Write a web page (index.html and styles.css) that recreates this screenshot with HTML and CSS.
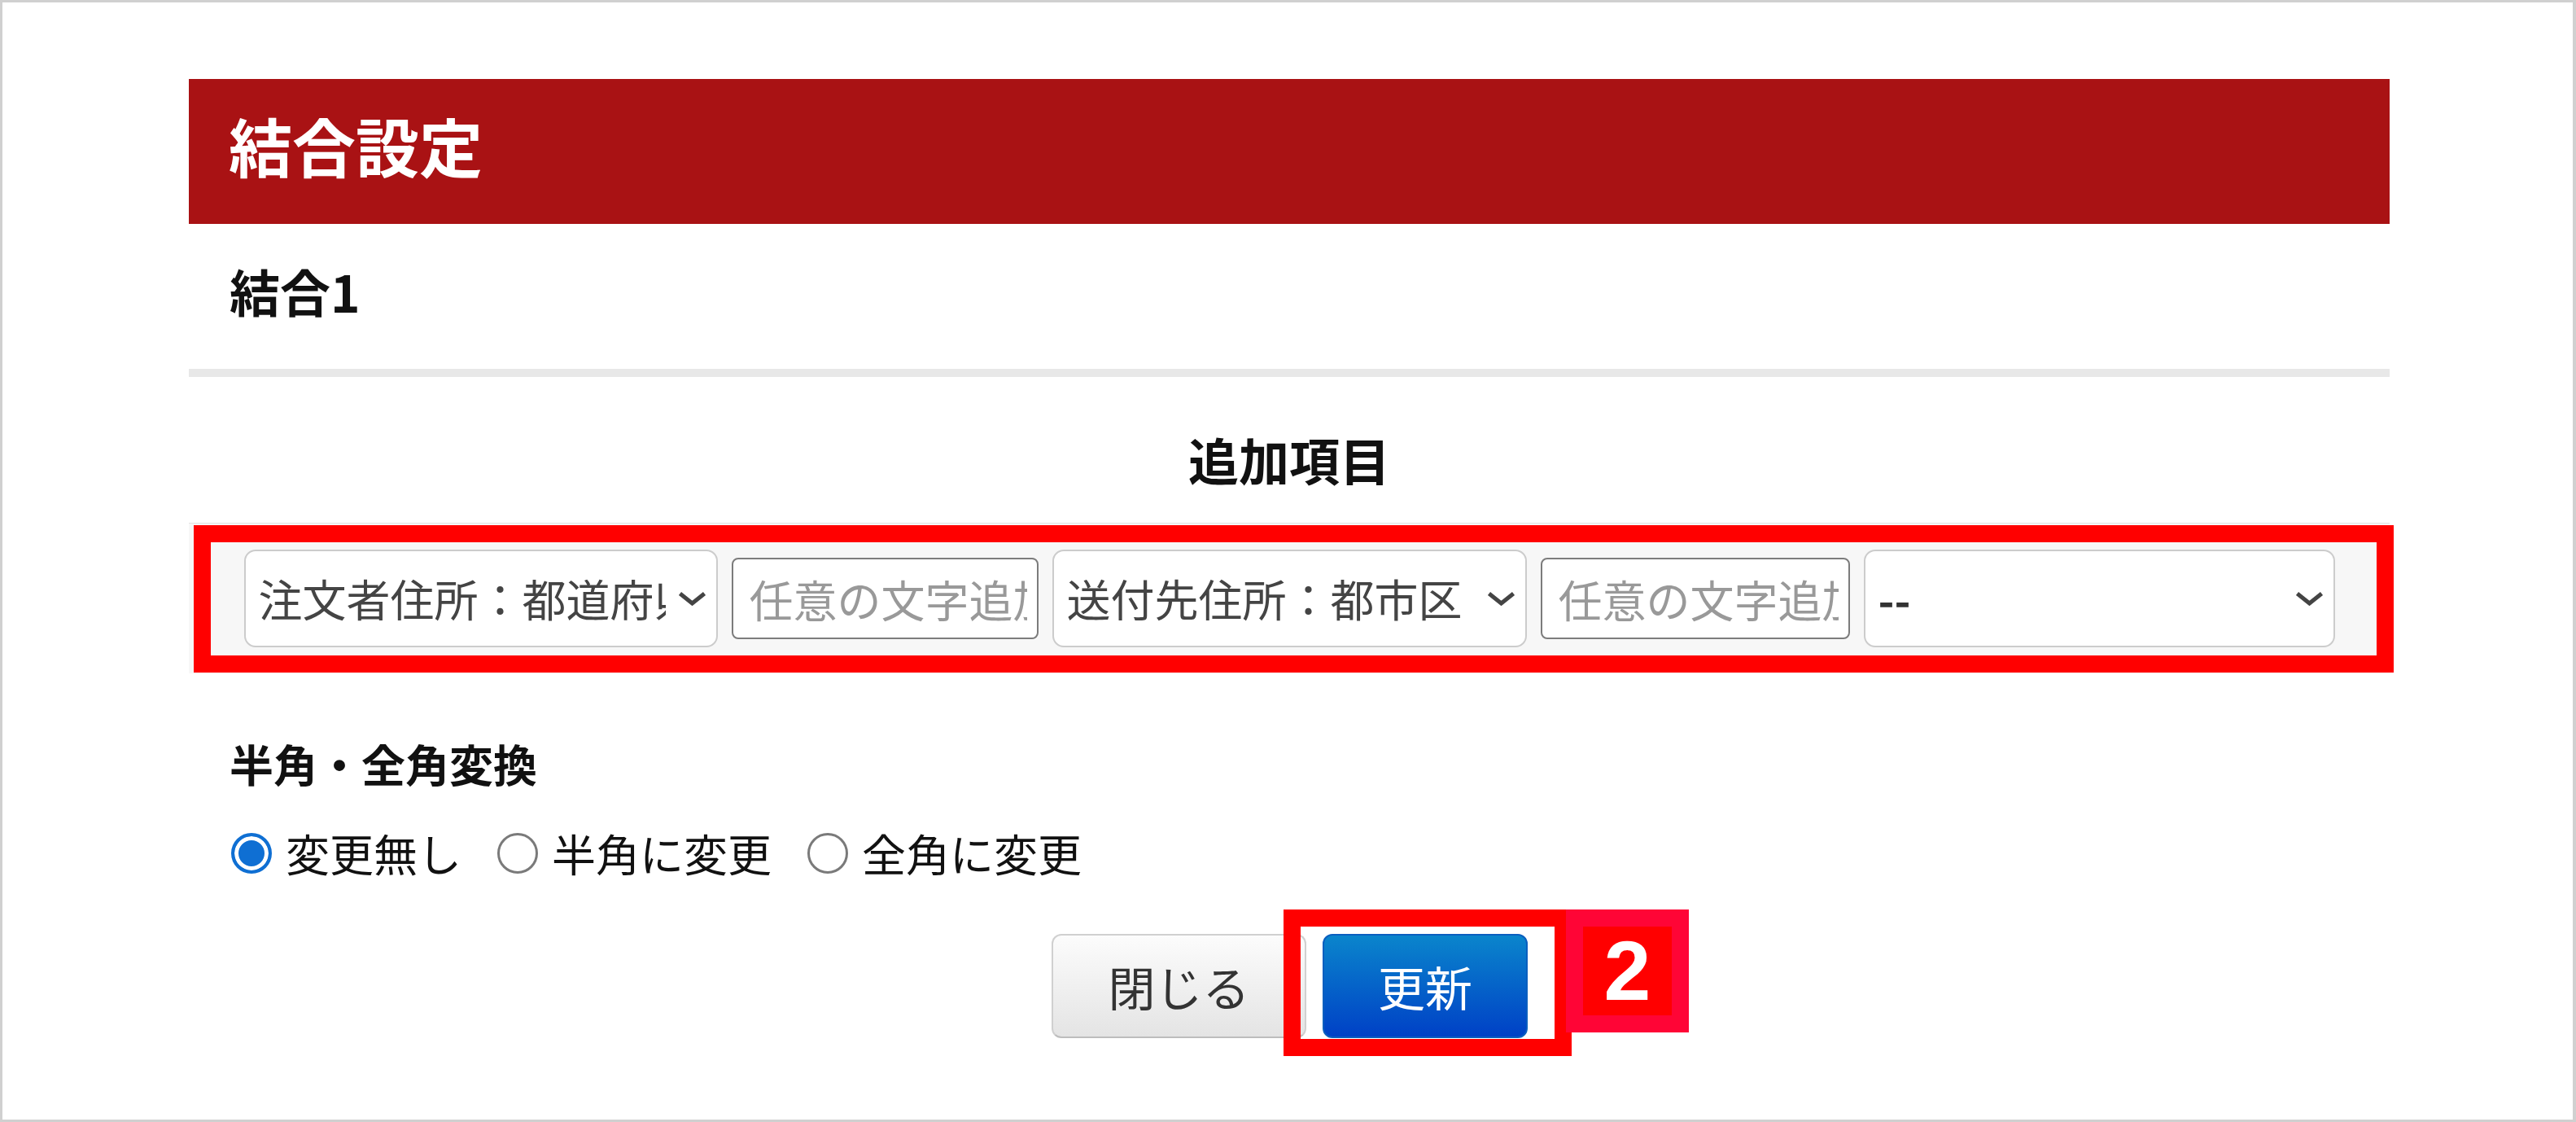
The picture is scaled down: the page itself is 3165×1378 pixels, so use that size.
FILE: index.html
```html
<!DOCTYPE html>
<html lang="ja">
<head>
    <meta charset="UTF-8">
    <meta name="viewport" content="width=device-width, initial-scale=1.0">
    <title>結合設定</title>
    <link rel="stylesheet" href="styles.css">
</head>
<body>
    <div class="frame">
        <div class="panel">
            <h1 class="panel-title">結合設定</h1>
            <div class="section-head">結合1</div>

            <h3 class="field-title">追加項目</h3>
            <div class="field-row">
                <div class="select select-a">
                    <span class="select-value">注文者住所：都道府県</span>
                    <svg class="chevron" viewBox="0 0 35 18"><path d="M2.5 3 L17.5 15 L32.5 3"/></svg>
                </div>
                <input type="text" class="text-input input-a" placeholder="任意の文字追加">
                <div class="select select-b">
                    <span class="select-value">送付先住所：都市区</span>
                    <svg class="chevron" viewBox="0 0 35 18"><path d="M2.5 3 L17.5 15 L32.5 3"/></svg>
                </div>
                <input type="text" class="text-input input-b" placeholder="任意の文字追加">
                <div class="select select-c">
                    <span class="select-value">--</span>
                    <svg class="chevron" viewBox="0 0 35 18"><path d="M2.5 3 L17.5 15 L32.5 3"/></svg>
                </div>
                <span class="mark mark-row"></span>
            </div>

            <div class="convert">
                <h4 class="convert-title">半角・全角変換</h4>
                <div class="radios">
                    <label class="radio"><input type="radio" name="conv" checked><span>変更無し</span></label>
                    <label class="radio"><input type="radio" name="conv"><span>半角に変更</span></label>
                    <label class="radio"><input type="radio" name="conv"><span>全角に変更</span></label>
                </div>
            </div>

            <div class="actions">
                <button type="button" class="btn btn-close">閉じる</button>
                <div class="update-wrap">
                    <button type="button" class="btn btn-update">更新</button>
                    <span class="mark mark-btn"></span>
                    <span class="badge">2</span>
                </div>
            </div>
        </div>
    </div>
</body>
</html>
```

FILE: styles.css
```css
* {
    box-sizing: border-box;
    margin: 0;
    padding: 0;
}
body {
    font-family: "Noto Sans CJK JP", "Noto Sans", sans-serif;
    background-color: #fff;
    color: #111;
}
.frame {
    width: 100vw;
    height: 100vh;
    border: 3px solid #d0d0d0;
    border-right-width: 4px;
    padding: 94px 0 0 229px;
    overflow: hidden;
}
.panel {
    width: 2704px;
}
.panel-title {
    height: 178px;
    background-color: #a91214;
    color: #fff;
    font-size: 78px;
    line-height: 78px;
    font-weight: bold;
    padding: 42px 49px 0;
}
.section-head {
    height: 188px;
    padding: 51px 50px 0;
    font-size: 62px;
    line-height: 62px;
    font-weight: bold;
    border-bottom: 10px solid #e8e8e8;
}
.field-title {
    margin-top: 70px;
    text-align: center;
    font-size: 62px;
    line-height: 62px;
    font-weight: bold;
}
.field-row {
    position: relative;
    margin-top: 47px;
    border-top: 1px solid #e2e2e2;
    background-color: #f7f7f7;
    padding: 32px 0;
    display: flex;
    justify-content: center;
    align-items: center;
    gap: 17px;
}
.select {
    height: 120px;
    display: flex;
    align-items: center;
    background-color: #fff;
    border: 2px solid #cccccc;
    border-radius: 14px;
    padding: 0 12px 0 16px;
    font-size: 54px;
    color: #444;
}
.select-a { width: 582px; }
.select-b { width: 583px; }
.select-c { width: 579px; }
.select-value {
    flex: 1;
    overflow: hidden;
    white-space: nowrap;
    line-height: 60px;
}
.select-a .select-value {
    flex: 0 0 500px;
}
.select-c .select-value {
    color: #333;
    font-weight: bold;
}
.chevron {
    width: 35px;
    height: 18px;
    margin-left: auto;
    flex-shrink: 0;
}
.chevron path {
    fill: none;
    stroke: #444;
    stroke-width: 5;
}
.text-input {
    height: 100px;
    border: 2px solid #7c7c7c;
    border-radius: 8px;
    padding: 0 12px 0 20px;
    font-family: "Noto Sans CJK JP", "Noto Sans", sans-serif;
    font-size: 54px;
    background-color: #fff;
    outline: none;
}
.text-input::placeholder {
    color: #999;
}
.input-a { width: 377px; }
.input-b { width: 380px; }
.mark {
    position: absolute;
    border: 21px solid #ff0000;
    pointer-events: none;
}
.mark-row {
    left: 6px;
    top: 2px;
    width: 2703px;
    height: 181px;
}
.convert {
    padding-left: 50px;
}
.convert-title {
    margin-top: 84px;
    font-size: 54px;
    line-height: 54px;
    font-weight: bold;
}
.radios {
    margin-top: 56px;
    display: flex;
    align-items: center;
    gap: 42px;
}
.radio {
    display: flex;
    align-items: center;
    gap: 17px;
    font-size: 54px;
    line-height: 54px;
    color: #111;
}
.radio input {
    appearance: none;
    width: 50px;
    height: 50px;
    margin-left: 2px;
    border: 3px solid #7a7a7a;
    border-radius: 50%;
    background-color: #fff;
}
.radio input:checked {
    border: 4px solid #0f6fd3;
    background-color: #0f6fd3;
    box-shadow: inset 0 0 0 5px #fff;
}
.actions {
    margin-top: 72px;
    display: flex;
    justify-content: center;
    gap: 20px;
    padding-left: 1px;
}
.update-wrap {
    position: relative;
}
.btn {
    height: 128px;
    padding: 0;
    border-radius: 12px;
    font-family: "Noto Sans CJK JP", "Noto Sans", sans-serif;
    font-size: 58px;
    line-height: 58px;
    white-space: nowrap;
    text-align: center;
    cursor: pointer;
}
.btn-close {
    width: 313px;
    background: linear-gradient(#fcfcfc, #e4e4e4);
    border: 2px solid #d0d0d0;
    border-bottom-color: #bdbdbd;
    color: #333;
}
.btn-update {
    width: 252px;
    background: linear-gradient(#0a85cc, #0041c6);
    border: 2px solid #0b5fbf;
    color: #fff;
}
.mark-btn {
    left: -48px;
    top: -30px;
    width: 354px;
    height: 180px;
}
.badge {
    position: absolute;
    left: 299px;
    top: -30px;
    width: 151px;
    height: 151px;
    border: 21px solid #ff0536;
    background-color: #ff0000;
    color: #fff;
    font-family: "Liberation Sans", Arial, sans-serif;
    font-weight: bold;
    font-size: 104px;
    line-height: 109px;
    text-align: center;
}
```
